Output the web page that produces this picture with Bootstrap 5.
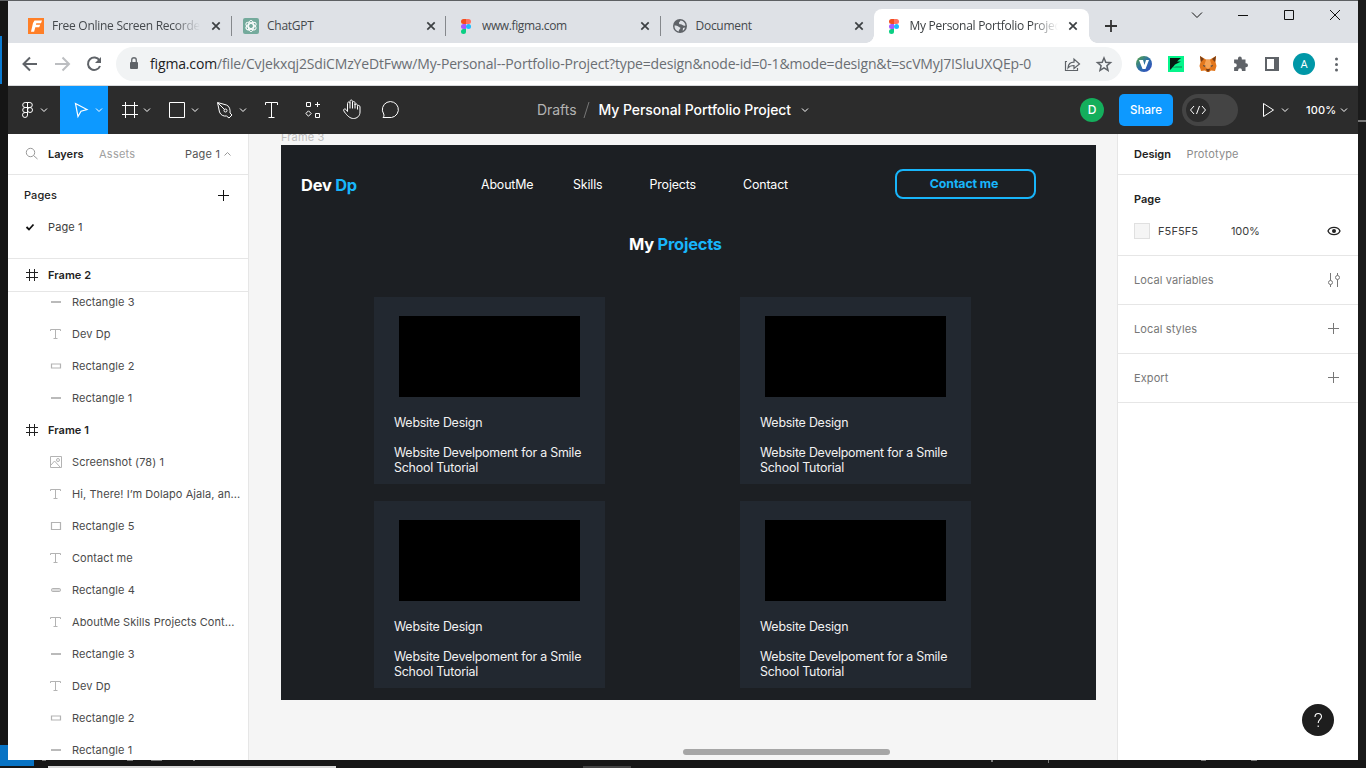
<!DOCTYPE html>
<html lang="en">
<head>
<meta charset="utf-8">
<title>My Personal Portfolio Project – Figma</title>
<link href="https://cdn.jsdelivr.net/npm/bootstrap@5.3.0/dist/css/bootstrap.min.css" rel="stylesheet">
<style>
body{width:1366px;height:768px;overflow:hidden;background:#181818;font-family:Inter,sans-serif;font-size:11px;line-height:16px;color:#3d3d3d}
svg{display:block;flex:none;fill:none;stroke:currentColor}
.ic-gray{color:#999}
.ic-dark{color:#222}
.ic-solid{stroke:none}
.nowrap{white-space:nowrap}
.desk-left{width:8px;padding-top:35px;background:#151515;border-top:1px solid #5d6063}
.desk-left i{display:block;width:2px;height:48px;background:#0a7ad1}
.desk-left b{display:block;height:20px;margin-top:661px;background:#0873c4}
.desk-right{width:8px;background:#1b1b1b;padding-top:120px}
.desk-right i{display:block;height:2px;background:#777}
.app-win{width:1350px;height:760px;border-top:1px solid #5d6063;background:#fff}
.tabstrip{height:42px;background:#dee1e6;font-family:"Open Sans",sans-serif;font-size:12px;color:#45494d}
.tab-item{height:34px;margin-top:8px;width:214.5px;padding-left:20px;position:relative}
.tab-item .cap{width:149px;overflow:hidden;margin-left:8px;letter-spacing:-.27px}
.tab-item .fade-cap{-webkit-mask-image:linear-gradient(90deg,#000 122px,transparent 148px);mask-image:linear-gradient(90deg,#000 122px,transparent 148px)}
.tab-item.sep::after{content:"";width:1px;height:20px;background:#85888c;position:absolute;right:0;top:7px}
.tab-item.on{background:#fff;border-radius:8px 8px 0 0;color:#3c4043;width:215px;padding-left:12px}
.tab-item.on::before,.tab-item.on::after{content:"";position:absolute;bottom:0;width:8px;height:8px}
.tab-item.on::before{left:-8px;background:radial-gradient(circle at 0 0,transparent 7.5px,#fff 8px)}
.tab-item.on::after{right:-8px;background:radial-gradient(circle at 100% 0,transparent 7.5px,#fff 8px)}
.addr{height:43px;border-bottom:1px solid #d8dadd;color:#5f6368}
.omni{width:1006px;height:34px;border-radius:17px;background:#f1f3f4;font-family:"Open Sans",sans-serif;font-size:14px;color:#6a6e73}
.omni .url{width:900px;letter-spacing:-.155px}
.omni .url b{font-weight:400;color:#202124}
.fig-bar{height:48px;background:#2c2c2c;color:#fff}
.fig-bar .act{background:#0d99ff}
.title-txt{font-size:14px;line-height:20px;letter-spacing:-.05px}
.share{width:54px;height:32px;border-radius:5px;background:#0d99ff;font-weight:500;font-size:11.5px}
.ava{width:24px;height:24px;border-radius:50%;background:#14ae5c;font-size:12px;font-weight:500}
.devsw{width:56px;height:32px;border-radius:16px;background:#444;padding-left:4px}
.devsw span{width:24px;height:24px;border-radius:50%;background:#2c2c2c}
.left-p{width:241px;border-right:1px solid #e6e6e6;background:#fff}
.right-p{width:241px;border-left:1px solid #e6e6e6;background:#fff;position:relative}
.line-b{border-bottom:1px solid #e6e6e6}
.lr{height:32px;padding-left:40px;letter-spacing:.08px;color:#4a4a4a}
.lr svg{margin-right:8px;color:#b3b3b3}
.lr.top{padding-left:16px;font-weight:600;color:#222;letter-spacing:.04px}
.lr.top svg{color:#222}
.layers{height:469px;overflow:hidden}
.layers .lr:first-child{margin-top:-6px}
.dim{color:#8c8c8c}
.canvas-a{background:#f5f5f5;overflow:hidden;position:relative}
.fr-name{height:11px;line-height:11px;padding-left:32px;color:#bdbdbd;overflow:hidden}
.fr-name span{display:block;margin-top:-2px;letter-spacing:.15px}
.frame3{width:815px;height:555px;margin-left:32px;background:#1c1f23;color:#fff}
.cy{color:#18b5fa}
.fhead{height:78px;font-size:12.4px;letter-spacing:-.14px}
.fhead>.nl{padding-top:2px}
.logo-t{font-size:16.4px;font-weight:700;letter-spacing:-.2px}
.cbtn{width:141px;height:30px;border:2px solid #18b5fa;border-radius:8px;font-weight:700;font-size:12.4px;color:#18b5fa}
.pcard{width:231px;height:187px;background:#222830;padding:19px 20px 0;font-size:12.4px;line-height:15px;color:#f2f2f2;letter-spacing:-.21px}
.pcard .pic{width:181px;height:81px;margin-left:5px;background:#000}
.pgrid{display:grid;grid-template-columns:231px 231px;column-gap:135px;row-gap:17px;margin-left:93px}
.hscroll{position:absolute;left:434px;top:615px;width:207px;height:6px;border-radius:3px;background:#a6a6a6}
.helpb{position:absolute;right:24px;bottom:24px;width:32px;height:32px;border-radius:50%;background:#1e1e1e;color:#fff}
.rsec{height:49px;padding:0 16px;letter-spacing:.1px;color:#777}
.swatch{width:16px;height:16px;background:#f5f5f5;border:1px solid #e0e0e0}
</style>
</head>
<body>
<svg width="0" height="0" class="position-absolute"><defs>
<symbol id="x" viewBox="0 0 10 10"><path d="M1.300 1.300l7.400 7.400M8.700 1.300l-7.400 7.400" stroke="#3c4043" stroke-width="1.700"/></symbol>
<symbol id="fig" viewBox="0 0 10 15"><g stroke="none"><path d="M2.500 0H5v5H2.500a2.500 2.500 0 0 1 0-5" fill="#f24e1e"/><path d="M5 0h2.500a2.500 2.500 0 0 1 0 5H5z" fill="#ff7262"/><path d="M2.500 5H5v5H2.500a2.500 2.500 0 0 1 0-5" fill="#a259ff"/><circle cx="7.500" cy="7.500" r="2.500" fill="#1abcfe"/><path d="M2.500 10H5v2.500A2.500 2.500 0 1 1 2.500 10" fill="#0acf83"/></g></symbol>
<symbol id="fr" viewBox="0 0 16 16"><path d="M5.500 2v12M10.500 2v12M2 5.500h12M2 10.500h12"/></symbol>
<symbol id="tt" viewBox="0 0 16 16"><path d="M2.500 5V3.500h10V5M7.500 3.500v9M5.500 12.500h4"/></symbol>
<symbol id="ln" viewBox="0 0 16 16"><path d="M3 8h10" stroke-width="1.800"/></symbol>
<symbol id="rc" viewBox="0 0 16 16"><path d="M3.500 6h9v4h-9z" stroke-width="1.200"/></symbol>
<symbol id="rb" viewBox="0 0 16 16"><path d="M3.500 4.500h9v7h-9z" stroke-width="1.200"/></symbol>
<symbol id="rp" viewBox="0 0 16 16"><rect x="3.500" y="6.500" width="9" height="3" rx="1.200" fill="#ddd"/></symbol>
<symbol id="im" viewBox="0 0 16 16"><path d="M2.500 2.500h11v11h-11zM3 11l3.500-4 6 6.500"/><circle cx="10" cy="6" r="1.500"/></symbol>
</defs></svg>
<div class="d-flex">
 <div class="desk-left" style="height:760px"><i></i><b></b></div>
 <div class="app-win d-flex flex-column">
  <div class="tabstrip d-flex">
   <div class="tab-item sep d-flex align-items-center" style="width:223.5px"><svg width="16" height="16" viewBox="0 0 16 16"><path fill="#ff7f27" stroke="none" d="M0 0h16v16H0z"/><path fill="#fff" stroke="none" d="M6.500 2.500h7.500l-1 2.700H8.300l-.4 1.500h4.300l-1 2.500H7.300l-1.200 4.500H3L5 5z"/></svg><span class="cap fade-cap nowrap">Free Online Screen Recorder</span><svg width="10" height="10" style="margin-left:10px"><use href="#x"/></svg></div>
   <div class="tab-item sep d-flex align-items-center" style="padding-left:11.500px"><svg width="16" height="16" viewBox="0 0 16 16"><rect width="16" height="16" rx="2" fill="#74aa9c" stroke="none"/><g stroke="#fff" stroke-width=".9"><path d="M8 5.300L5.700 6.600v5.200a2.400 2.400 0 0 1-2.200-3.600M8 5.300l2.300 1.300v2.700L8 10.700 5.700 9.400"/><ellipse cx="8" cy="8" rx="2.800" ry="5.600"/><ellipse cx="8" cy="8" rx="2.800" ry="5.600" transform="rotate(60 8 8)"/><ellipse cx="8" cy="8" rx="2.800" ry="5.600" transform="rotate(120 8 8)"/></g></svg><span class="cap nowrap" style="width:149px">ChatGPT</span><svg width="10" height="10" style="margin-left:10px"><use href="#x"/></svg></div>
   <div class="tab-item sep d-flex align-items-center" style="padding-left:15px"><svg width="10" height="15"><use href="#fig"/></svg><span class="cap nowrap" style="margin-left:11px;letter-spacing:-.38px">www.figma.com</span><svg width="10" height="10" style="margin-left:9px"><use href="#x"/></svg></div>
   <div class="tab-item d-flex align-items-center" style="padding-left:12px;width:213px"><svg width="14" height="14" viewBox="0 0 14 14"><circle cx="7" cy="7" r="7" fill="#5f6368" stroke="none"/><path d="M1.500 6.500C4 6 5.500 7.500 7 8.500S5.500 10 5.800 12.600C3 12 1.300 9.500 1.500 6.500zM7.500 1.500c-.5 1.500-2 1.500-1.500 3 .6 1.500 2.500.5 3.500 1.500.8.800 2 .8 3 .5C12.300 4 10.500 1.700 7.500 1.500zM10 9l2-.5c-.3 1.500-1 2.500-2.300 3.300z" fill="#dee1e6" stroke="none"/></svg><span class="cap nowrap" style="margin-left:9px">Document</span><svg width="10" height="10" style="margin-left:9px"><use href="#x"/></svg></div>
   <div class="tab-item on d-flex align-items-center"><svg width="10" height="15" style="margin-left:3px"><use href="#fig"/></svg><span class="cap fade-cap nowrap" style="margin-left:11px">My Personal Portfolio Project</span><svg width="10" height="10" style="margin-left:9px"><use href="#x"/></svg></div>
   <svg class="ms-auto" width="269" height="42" viewBox="1089 1 269 42"><path d="M1111 20v12M1105 26h12" stroke="#333" stroke-width="1.800"/><path stroke="#111" d="M1192 12.500l5 5 5-5M1238 15.500h10M1284.500 10.500h9v9h-9zM1330 10l10 10M1340 10l-10 10"/></svg>
  </div>
  <div class="addr d-flex align-items-center">
   <svg width="108" height="42" viewBox="8 43 108 42" stroke-width="2"><path d="M37 64H24M30 57.500L23.500 64l6.500 6.500"/><path stroke="#bcbec1" d="M55 64h13M62.500 57.500L69 64l-6.500 6.500"/><path d="M99.500 60.500A6.200 6.200 0 1 0 100 66"/><path d="M101 57v6h-6z" fill="currentColor" stroke="none"/></svg>
   <div class="omni d-flex align-items-center">
    <svg width="34" height="34" viewBox="116 47 34 34"><rect x="130" y="62" width="8" height="7" rx="1" fill="#5f6368" stroke="none"/><path d="M131.700 62v-2a2.300 2.300 0 0 1 4.600 0v2" stroke-width="1.400"/></svg>
    <span class="url nowrap"><b>figma.com</b>/file/CvJekxqj2SdiCMzYeDtFww/My-Personal--Portfolio-Project?type=design&amp;node-id=0-1&amp;mode=design&amp;t=scVMyJ7ISluUXQEp-0</span>
    <svg width="72" height="34" viewBox="1050 47 72 34"><path d="M1067 61.500h-1.500v9h12v-2.500M1068 68c.3-4 2.500-5.800 6-5.800V59l5.500 5-5.500 4.500v-3c-3 0-4.800.800-6 2.500z" stroke="#5f6368" stroke-width="1.200"/><path d="M1104 58l1.800 4.300 4.700.4-3.600 3 1.100 4.600-4-2.500-4 2.500 1.100-4.600-3.600-3 4.700-.4z" stroke="#5f6368" stroke-width="1.500"/></svg>
   </div>
   <svg width="236" height="42" viewBox="1122 43 236 42"><defs><linearGradient id="vg" x2="1" y2="1"><stop stop-color="#59a83f"/><stop offset=".5" stop-color="#2c6fa8"/><stop offset="1" stop-color="#3446c2"/></linearGradient></defs>
   <g stroke="none"><circle cx="1144" cy="64" r="8" fill="url(#vg)"/><path d="M1139 60h4l1.500 5 1.500-5h3l-3.500 9h-3z" fill="#fff"/><path fill="#05f58b" d="M1168 56h16v16h-16z"/><path fill="#071a12" d="M1170 58h11l-4 3.500h4l-6 3-2 2.500-3 3z"/><path fill="#0bbb70" d="M1172 68l4-2h6v2z"/>
   <path fill="#e2761b" d="M1200 56l6 3.500h4l6-3.500-.5 6 1 4-1.500 5-4-.5-2 1.500h-2l-2-1.500-4 .5-1.500-5 1-4z"/><path fill="#f6a354" d="M1206 60h4l2 6-4 3-4-3z"/><path fill="#763d16" d="M1200 56l4 3-3 3zM1216 56l-4 3 3 3zM1206 69h4l-1 2.500h-2z"/><path fill="#233447" d="M1203 65l3 1-2 .8zM1213 65l-3 1 2 .8z"/>
   <path fill="#5f6368" d="M1238 58.500v1h-3.900v3.800h.7a2 2 0 0 1 0 4h-.7v3.700h4v-.8a1.900 1.900 0 0 1 3.800 0v.8h3.600v-3.800h.5a2 2 0 0 0 0-4h-.5v-3.700h-3.700v-1a1.900 1.900 0 0 0-3.800 0z"/><circle cx="1304" cy="64" r="11" fill="#0097a7"/><g fill="#5f6368"><circle cx="1336.500" cy="59" r="1.500"/><circle cx="1336.500" cy="64.500" r="1.500"/><circle cx="1336.500" cy="70" r="1.500"/></g><text x="1304" y="68" fill="#fff" font-size="11" text-anchor="middle" font-family="Roboto,sans-serif">A</text></g><path d="M1266 58h12v12h-12z" stroke-width="2"/><path fill="#5f6368" stroke="none" d="M1274 58h4v12h-4z"/></svg>
  </div>
  <div class="fig-bar d-flex align-items-center">
   <svg width="52" height="48" viewBox="8 86 52 48"><path d="M27.500 102.500h-2.300a2.500 2.500 0 0 0 0 5h2.300zh2.300a2.500 2.500 0 0 1 0 5h-2.300zM27.500 107.500h-2.300a2.500 2.500 0 0 0 0 5h2.300zM27.500 112.500h-2.300a2.500 2.500 0 1 0 2.300 2.500z"/><circle cx="30" cy="110" r="2.500"/><path d="M41 108.500l3 3 3-3"/></svg>
   <svg class="act" width="48" height="48" viewBox="60 86 48 48"><path d="M75.500 103.500l11.500 6-6 1.800-3 5.200z" stroke-width="1.200"/><path d="M96 108.500l3 3 3-3"/></svg>
   <svg width="304" height="48" viewBox="108 86 304 48"><path d="M125.500 102v16M134.500 102v16M122 105.500h16M122 114.500h16M144 108.500l3 3 3-3M169.500 102.500h15v15h-15zM192 108.500l3 3 3-3M240 108.500l3 3 3-3M265.500 105v-2.500h12v2.500M271.500 102.500v15M268.500 117.500h6"/><path d="M217.500 102.500l9 2.500c3 1 4 5 3.500 8l2 2-3 3-2.500-2c-3 .5-6-1-7-4zM218 103l6.500 6.500"/><circle cx="225.500" cy="110.500" r="1.500"/><path d="M306.500 102.500h4v4h-4zM315.500 113.500h4v4h-4zM317.500 102v5M315 104.500h5M308.500 110.800l2.700 2.700-2.700 2.700-2.700-2.700z"/><path d="M347.500 112v-8c0-2 2.500-2 2.500 0v-2c0-2 2.500-2 2.500 0v1.500c0-2 2.500-2 2.500 0v2c0-1.500 2.500-1.500 2.500.5v1c0-1.500 2.500-1.500 2.500.5v5c0 4-3 6.500-6.500 6.500s-6-2.500-9-6.500c-2-2.500 0-4 1.500-2.500zM350 104v5M352.500 103.500v5.500M355 105v4M357.500 107v3" transform="translate(0 -.5)"/><path d="M383 117.500c1-1 1.200-2 .7-3.500a8 8 0 1 1 7.800 3.500z"/></svg>
   <div class="title-txt d-flex align-items-center nowrap" style="margin-left:125px;width:293px"><span style="color:#b3b3b3">Drafts</span><svg width="22" height="20" viewBox="0 0 22 20"><path d="M8 18l5-16" stroke="#777"/></svg><span style="font-weight:500">My Personal Portfolio Project</span><svg width="28" height="20" viewBox="0 0 28 20"><path d="M11 8.500l3 3 3-3"/></svg></div>
   <div class="ava d-flex align-items-center justify-content-center" style="margin-left:250px">D</div>
   <div class="share d-flex align-items-center justify-content-center" style="margin-left:15px">Share</div>
   <div class="devsw d-flex align-items-center" style="margin-left:9px"><span><svg width="24" height="24" viewBox="0 0 24 24"><path d="M8 8l-3.500 4L8 16M16 8l3.500 4-3.500 4M13.500 8l-3 8"/></svg></span></div>
   <svg width="66" height="48" viewBox="1238 86 66 48"><path d="M1263.500 103.500l10 6.500-10 6.500zM1282 108.500l3 3 3-3"/></svg>
   <span style="font-weight:500;width:32px;margin-left:2px;letter-spacing:.15px">100%</span><svg width="20" height="48" viewBox="1338 86 20 48"><path d="M1341 108.500l3 3 3-3"/></svg>
  </div>
  <div class="d-flex flex-fill" style="height:626px">
   <div class="left-p">
    <div class="line-b d-flex align-items-center nowrap" style="height:41px"><svg class="ic-gray" width="40" height="40" viewBox="8 134 40 40"><circle cx="30.500" cy="152.500" r="4.200"/><path d="M33.500 155.500l4 3.500"/></svg><b style="font-weight:600;width:51px;color:#222">Layers</b><span style="color:#a0a0a0;letter-spacing:.25px;width:86px">Assets</span><span style="letter-spacing:.2px;color:#555">Page 1</span><svg class="ic-gray" width="16" height="16" viewBox="0 0 16 16"><path d="M4.500 9.500l3-3 3 3"/></svg></div>
    <div class="line-b" style="height:84px">
     <div class="d-flex align-items-center justify-content-between" style="height:40px;padding:0 18px 0 16px"><span style="font-weight:500;letter-spacing:.1px;color:#222">Pages</span><svg width="13" height="13" viewBox="0 0 13 13"><path stroke="#111" d="M6.500 1v11M1 6.500h11"/></svg></div>
     <div class="d-flex align-items-center" style="height:24px"><svg width="40" height="24" viewBox="8 215 40 24"><path d="M26.500 227l2.500 2.500 4.500-5" stroke="#111" stroke-width="1.800"/></svg><span style="letter-spacing:.1px">Page 1</span></div>
    </div>
    <div class="lr top d-flex align-items-center line-b" style="height:33px"><svg width="16" height="16"><use href="#fr"/></svg>Frame 2</div>
    <div class="layers nowrap">
     <div class="lr d-flex align-items-center"><svg width="16" height="16"><use href="#ln"/></svg>Rectangle 3</div>
     <div class="lr d-flex align-items-center"><svg width="16" height="16"><use href="#tt"/></svg>Dev Dp</div>
     <div class="lr d-flex align-items-center"><svg width="16" height="16"><use href="#rc"/></svg>Rectangle 2</div>
     <div class="lr d-flex align-items-center"><svg width="16" height="16"><use href="#ln"/></svg>Rectangle 1</div>
     <div class="lr top d-flex align-items-center"><svg width="16" height="16"><use href="#fr"/></svg>Frame 1</div>
     <div class="lr d-flex align-items-center"><svg width="16" height="16"><use href="#im"/></svg>Screenshot (78) 1</div>
     <div class="lr d-flex align-items-center"><svg width="16" height="16"><use href="#tt"/></svg>Hi, There! I’m Dolapo Ajala, an...</div>
     <div class="lr d-flex align-items-center"><svg width="16" height="16"><use href="#rb"/></svg>Rectangle 5</div>
     <div class="lr d-flex align-items-center"><svg width="16" height="16"><use href="#tt"/></svg>Contact me</div>
     <div class="lr d-flex align-items-center"><svg width="16" height="16"><use href="#rp"/></svg>Rectangle 4</div>
     <div class="lr d-flex align-items-center"><svg width="16" height="16"><use href="#tt"/></svg>AboutMe Skills Projects Cont...</div>
     <div class="lr d-flex align-items-center"><svg width="16" height="16"><use href="#ln"/></svg>Rectangle 3</div>
     <div class="lr d-flex align-items-center"><svg width="16" height="16"><use href="#tt"/></svg>Dev Dp</div>
     <div class="lr d-flex align-items-center"><svg width="16" height="16"><use href="#rc"/></svg>Rectangle 2</div>
     <div class="lr d-flex align-items-center"><svg width="16" height="16"><use href="#ln"/></svg>Rectangle 1</div>
    </div>
   </div>
   <div class="canvas-a flex-fill">
    <div class="fr-name"><span>Frame 3</span></div>
    <div class="frame3">
     <div class="fhead d-flex align-items-center nowrap"><span class="logo-t" style="width:180px;margin-left:20px;padding-top:1px">Dev <span class="cy">Dp</span></span><span class="nl" style="width:92px">AboutMe</span><span class="nl" style="width:76.500px">Skills</span><span class="nl" style="width:93.500px">Projects</span><span class="nl" style="width:152px">Contact</span><div class="cbtn d-flex align-items-center justify-content-center pe-1" style="padding-left:1px">Contact me</div></div>
     <div class="logo-t d-flex align-items-center" style="height:42px;margin-left:348px">My&nbsp;<span class="cy">Projects</span></div>
     <div class="pgrid" style="margin-top:32px">
      <div class="pcard"><div class="pic"></div><div style="padding-top:18px">Website Design</div><div class="nowrap" style="padding-top:15px">Website Develpoment for a Smile<br>School Tutorial</div></div>
      <div class="pcard"><div class="pic"></div><div style="padding-top:18px">Website Design</div><div class="nowrap" style="padding-top:15px">Website Develpoment for a Smile<br>School Tutorial</div></div>
      <div class="pcard"><div class="pic"></div><div style="padding-top:18px">Website Design</div><div class="nowrap" style="padding-top:15px">Website Develpoment for a Smile<br>School Tutorial</div></div>
      <div class="pcard"><div class="pic"></div><div style="padding-top:18px">Website Design</div><div class="nowrap" style="padding-top:15px">Website Develpoment for a Smile<br>School Tutorial</div></div>
     </div>
    </div>
    <div class="hscroll"></div>
   </div>
   <div class="right-p">
    <div class="line-b d-flex align-items-center" style="height:41px;padding-left:16px"><b style="font-weight:600;width:52.500px;color:#222">Design</b><span class="dim" style="letter-spacing:.15px">Prototype</span></div>
    <div class="line-b" style="height:81px;padding:8px 16px 0"><div class="d-flex align-items-center" style="height:32px;font-weight:600;color:#222">Page</div><div class="d-flex align-items-center" style="height:32px"><div class="swatch"></div><span style="margin-left:8px;width:73px;letter-spacing:.1px">F5F5F5</span><span style="letter-spacing:-.1px">100%</span><svg class="ms-auto ic-dark" width="16" height="16" viewBox="0 0 16 16" stroke-width="1.300"><path d="M2 8c2-4.800 10-4.800 12 0-2 4.800-10 4.800-12 0z"/><circle cx="8" cy="8" r="2" fill="#222" stroke="none"/></svg></div></div>
    <div class="rsec line-b d-flex align-items-center justify-content-between">Local variables<svg width="16" height="16" viewBox="0 0 16 16"><path d="M4.500 1v7.500M4.500 12.500V15M11.500 1v2.500M11.500 7.500V15"/><circle cx="4.500" cy="10.500" r="2"/><circle cx="11.500" cy="5.500" r="2"/></svg></div>
    <div class="rsec line-b d-flex align-items-center justify-content-between">Local styles<svg width="16" height="16" viewBox="0 0 16 16"><path d="M7.500 2v11M2 7.500h11"/></svg></div>
    <div class="rsec line-b d-flex align-items-center justify-content-between">Export<svg width="16" height="16" viewBox="0 0 16 16"><path d="M7.500 2v11M2 7.500h11"/></svg></div>
    <div class="helpb"><svg width="32" height="32" viewBox="0 0 32 32" stroke-width="1.100"><path d="M13 13c0-4.500 6.500-4.500 6.500-.5 0 3-3.300 3-3.300 6.500M16.200 21.500v1.500"/></svg></div>
   </div>
  </div>
 </div>
 <div class="desk-right" style="height:760px"><i></i></div>
</div>
<svg class="ic-solid" width="1366" height="8" viewBox="0 760 1366 8"><path fill="#161616" d="M0 760h1366v8H0z"/><path fill="#0873c4" d="M0 760h34v6H0z"/><path fill="#d8d8d8" d="M48 766h288v2H48z"/><path fill="#444" d="M583 766h48v2h-48z"/><path fill="#777" d="M42 760h4v1h-4zM127 760h6v1h-6zM151 760h11v1h-11zM193 760h2v1h-2zM991 760h2v2h-2zM1048 760h1v3h-1zM1201 760h5v1h-5zM1251 760h6v1h-6z"/></svg>
<script src="https://cdn.jsdelivr.net/npm/bootstrap@5.3.0/dist/js/bootstrap.bundle.min.js"></script>
</body>
</html>
